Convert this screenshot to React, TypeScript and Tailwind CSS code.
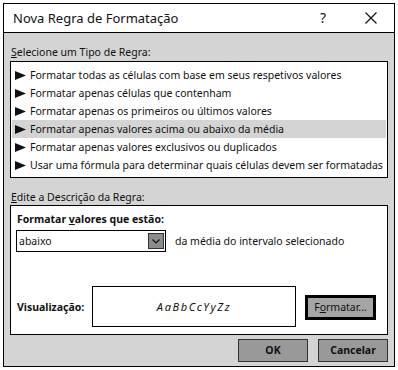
import React from "react";

const items = [
  "Formatar todas as células com base em seus respetivos valores",
  "Formatar apenas células que contenham",
  "Formatar apenas os primeiros ou últimos valores",
  "Formatar apenas valores acima ou abaixo da média",
  "Formatar apenas valores exclusivos ou duplicados",
  "Usar uma fórmula para determinar quais células devem ser formatadas",
];

function Arrow() {
  return (
    <svg width="11" height="9" viewBox="0 0 11 9" className="shrink-0">
      <polygon points="0,0 11,4.5 0,9" fill="#111" />
    </svg>
  );
}

export default function App() {
  return (
    <div className="w-[398px] h-[370px] bg-white pt-[3px] pl-[3px] text-[#111]" style={{ fontFamily: '"Noto Sans", "DejaVu Sans", sans-serif' }}>
      <div className="w-[392px] h-[364px] border border-black flex flex-col bg-[#d4d4d4]">
        <div className="h-[29px] shrink-0 bg-white border-b border-black flex items-center pl-[9px]">
          <span className="text-[13px] leading-none">Nova Regra de Formatação</span>
          <span className="ml-auto text-[14px] leading-none mr-[39px]">?</span>
          <svg width="12" height="12" viewBox="0 0 12 12" className="mr-[17px]">
            <path d="M0.5 0.5 L11.5 11.5 M11.5 0.5 L0.5 11.5" stroke="#111" strokeWidth="1.2" />
          </svg>
        </div>
        <div className="flex-1 flex flex-col px-[6px]">
          <div className="mt-[13px] h-[12px] flex items-center pl-[1px] text-[10.5px] leading-none">
            <span><span className="underline">S</span>elecione um Tipo de Regra:</span>
          </div>
          <div className="mt-[3px] h-[117px] bg-white border border-black pt-[4px] px-[1px]">
            {items.map((t, i) => (
              <div key={i} className={`h-[18px] flex items-center gap-[4px] pl-[3px] text-[10.5px] leading-none whitespace-nowrap ${i === 3 ? "bg-[#d4d4d4]" : ""}`}>
                <Arrow />
                <span>{t}</span>
              </div>
            ))}
          </div>
          <div className="mt-[13px] h-[12px] flex items-center pl-[1px] text-[10.5px] leading-none">
            <span><span className="underline">E</span>dite a Descrição da Regra:</span>
          </div>
          <div className="mt-[2px] h-[130px] bg-white border border-black flex flex-col pl-[5px]">
            <div className="mt-[7px] h-[13px] flex items-center pl-[1px] text-[10.5px] font-bold leading-none">
              <span>Formatar <span className="underline">v</span>alores que estão:</span>
            </div>
            <div className="mt-[4px] flex items-center">
              <div className="w-[150px] h-[22px] border border-black flex items-center pl-[2px] pr-[1px] text-[10.5px] leading-none">
                <span>abaixo</span>
                <div className="ml-auto w-[16px] h-[16px] bg-[#8c8c8c] border border-[#333] flex items-center justify-center">
                  <svg width="8" height="5" viewBox="0 0 8 5">
                    <path d="M0.5 0.5 L4 4 L7.5 0.5" stroke="#111" strokeWidth="1.2" fill="none" />
                  </svg>
                </div>
              </div>
              <span className="ml-[9px] text-[10.5px] leading-none">da média do intervalo selecionado</span>
            </div>
            <div className="mt-[34px] flex items-start">
              <span className="mt-[16px] pl-[1px] w-[76px] text-[10.5px] font-bold leading-none">Visualização:</span>
              <div className="w-[204px] h-[41px] border border-black flex items-center justify-center">
                <span className="italic text-[11px] tracking-[1.6px] leading-none">AaBbCcYyZz</span>
              </div>
              <div className="ml-[9px] mt-[9px] w-[71px] h-[25px] border-[3px] border-black bg-[#a5a5a5] flex items-center justify-center text-[10.5px] leading-none">
                <span>F<span className="underline">o</span>rmatar...</span>
              </div>
            </div>
          </div>
          <div className="mt-[4px] flex justify-end gap-[10px]">
            <div className="w-[70px] h-[23px] border border-[#333] bg-[#999999] flex items-center justify-center text-[10.5px] font-bold leading-none">OK</div>
            <div className="w-[70px] h-[23px] border border-[#333] bg-[#999999] flex items-center justify-center text-[10.5px] font-bold leading-none">Cancelar</div>
          </div>
        </div>
      </div>
    </div>
  );
}
